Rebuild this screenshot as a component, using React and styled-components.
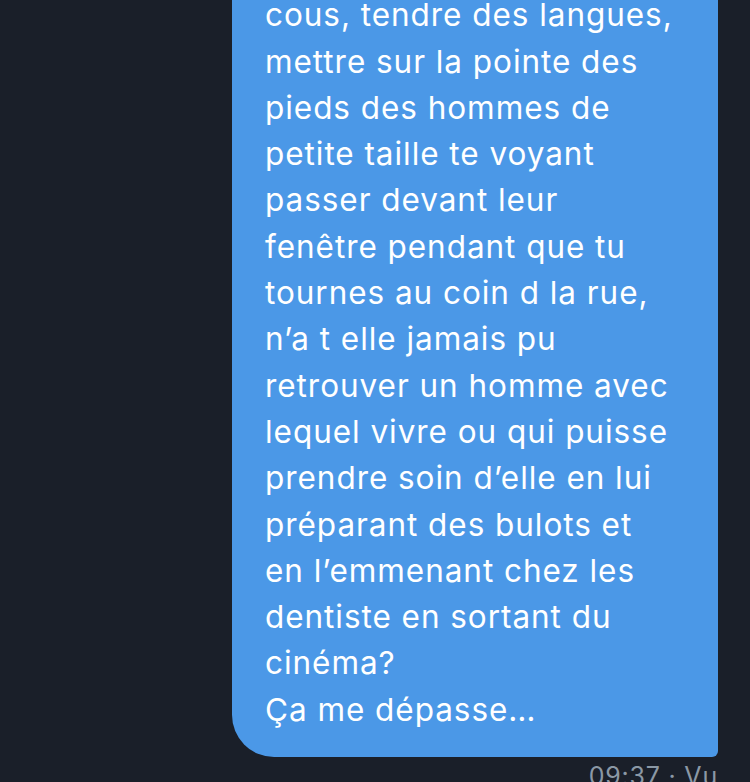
import React from 'react';
import styled, { createGlobalStyle } from 'styled-components';

const GlobalStyle = createGlobalStyle`
  html, body {
    margin: 0;
    padding: 0;
    background-color: #1a1f29;
  }
`;

const Screen = styled.div`
  display: flex;
  flex-direction: column;
  align-items: flex-end;
  justify-content: flex-end;
  height: 782px;
  padding-right: 32px;
  box-sizing: border-box;
  overflow: hidden;
  background-color: #1a1f29;
  font-family: Inter, "Noto Sans", sans-serif;
`;

const Bubble = styled.div`
  flex-shrink: 0;
  width: 486px;
  box-sizing: border-box;
  padding: 0 10px 24px 33px;
  background-color: #4b98e7;
  border-radius: 0 0 6px 42px;
  color: #fff;
  font-size: 31.5px;
  letter-spacing: 0.95px;
  line-height: 46.3px;
  white-space: pre-line;
`;

const Meta = styled.div`
  flex-shrink: 0;
  height: 25px;
  box-sizing: border-box;
  padding-top: 4px;
  color: #8b98a5;
  font-size: 25px;
  line-height: 30px;
  letter-spacing: 0.8px;
  white-space: nowrap;
`;

const lines = [
  'cous, tendre des langues,',
  'mettre sur la pointe des',
  'pieds des hommes de',
  'petite taille te voyant',
  'passer devant leur',
  'fenêtre pendant que tu',
  'tournes au coin d la rue,',
  'n’a t elle jamais pu',
  'retrouver un homme avec',
  'lequel vivre ou qui puisse',
  'prendre soin d’elle en lui',
  'préparant des bulots et',
  'en l’emmenant chez les',
  'dentiste en sortant du',
  'cinéma?',
  'Ça me dépasse…',
];

const App = () => {
  return (
    <>
      <GlobalStyle />
      <Screen>
        <Bubble>{lines.join('\n')}</Bubble>
        <Meta>09:37 · Vu</Meta>
      </Screen>
    </>
  );
};

export default App;
